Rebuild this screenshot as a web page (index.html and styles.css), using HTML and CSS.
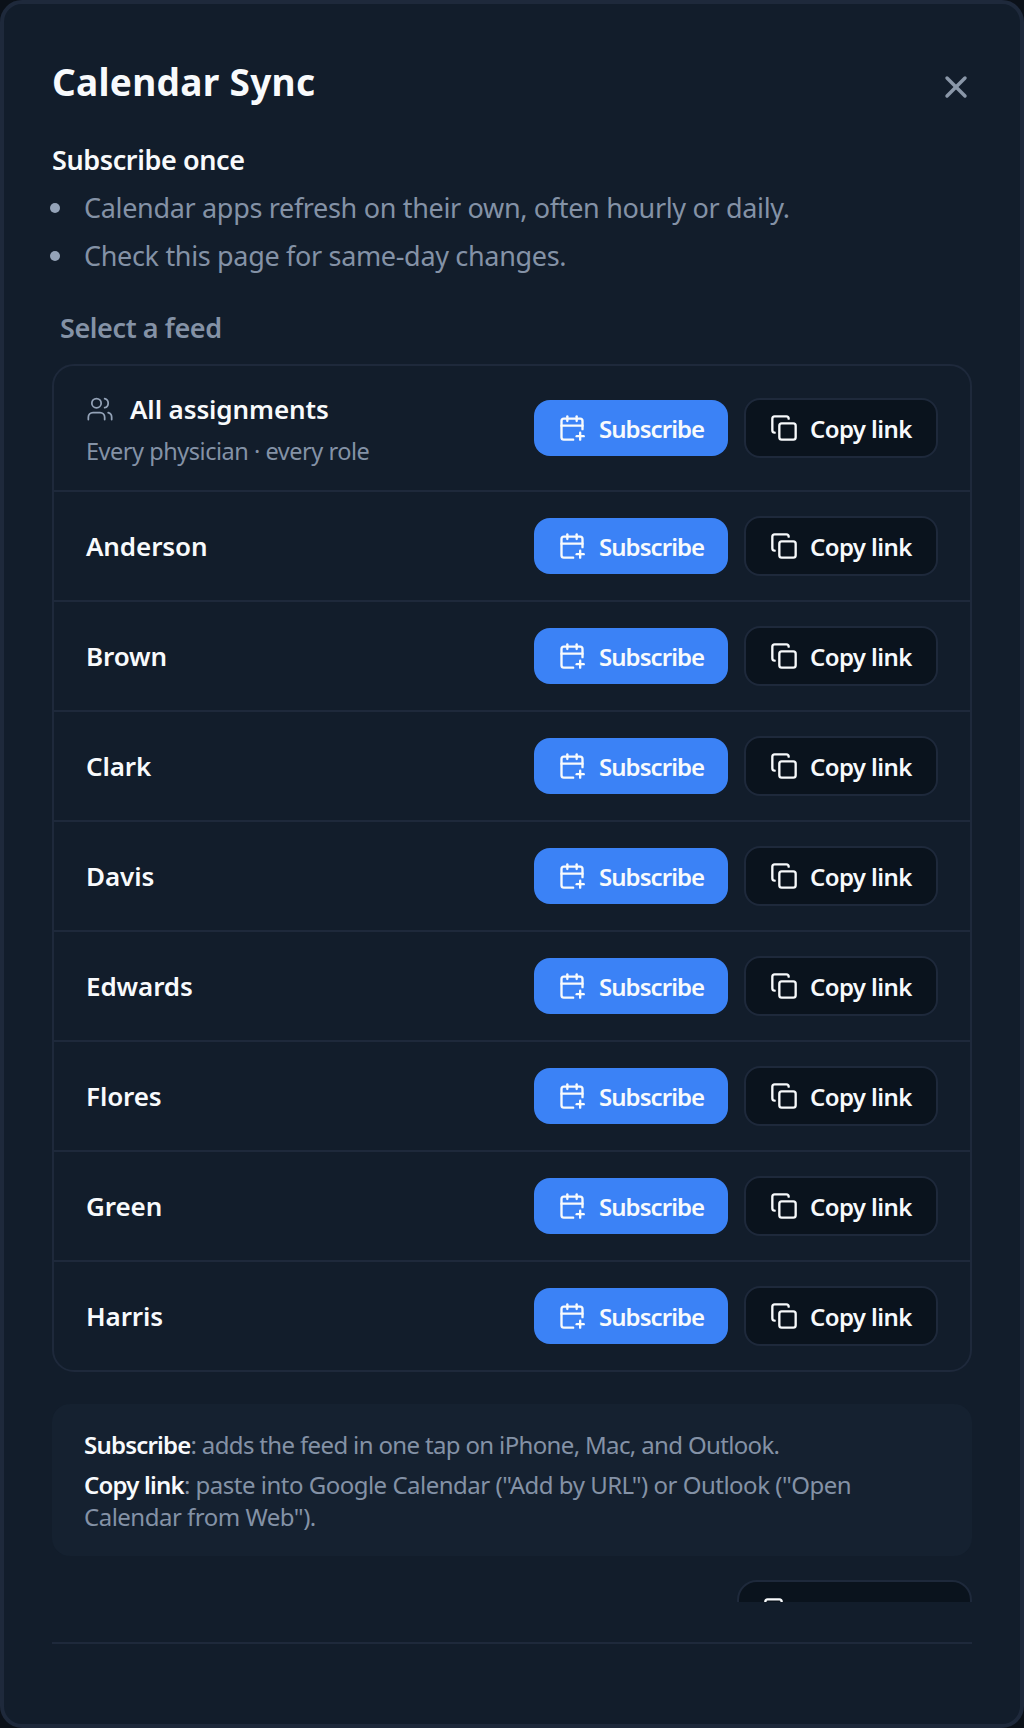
FILE: index.html
```html
<!DOCTYPE html>
<html lang="en">
<head>
<meta charset="utf-8">
<title>Calendar Sync</title>
<link rel="stylesheet" href="styles.css">
</head>
<body>
<svg class="sprite" width="0" height="0" aria-hidden="true">
  <symbol id="i-cal" viewBox="0 0 24 24"><path d="M21 13V6a2 2 0 0 0-2-2H5a2 2 0 0 0-2 2v14c0 1.1.9 2 2 2h8"/><path d="M16 2v4"/><path d="M8 2v4"/><path d="M3 10h18"/><path d="M19 16v6"/><path d="M16 19h6"/></symbol>
  <symbol id="i-copy" viewBox="0 0 24 24"><rect x="8" y="8" width="14" height="14" rx="2"/><path d="M4 16c-1.1 0-2-.9-2-2V4c0-1.1.9-2 2-2h10c1.1 0 2 .9 2 2"/></symbol>
</svg>
<div class="modal">
  <header class="head">
    <h1>Calendar Sync</h1>
    <svg class="close" viewBox="0 0 24 24"><path d="M18 6 6 18"/><path d="m6 6 12 12"/></svg>
  </header>
  <div class="body">
    <h2>Subscribe once</h2>
    <ul class="tips">
      <li>Calendar apps refresh on their own, often hourly or daily.</li>
      <li>Check this page for same-day changes.</li>
    </ul>
    <h3>Select a feed</h3>
    <div class="list">
      <div class="row first">
        <div class="who">
          <div class="all">
            <svg class="users" viewBox="0 0 24 24"><path d="M16 21v-2a4 4 0 0 0-4-4H6a4 4 0 0 0-4 4v2"/><circle cx="9" cy="7" r="4"/><path d="M22 21v-2a4 4 0 0 0-3-3.87"/><path d="M16 3.13a4 4 0 0 1 0 7.75"/></svg>
            <span class="name">All assignments</span>
          </div>
          <div class="sub">Every physician · every role</div>
        </div>
        <a class="btn sub-btn"><svg class="ico"><use href="#i-cal"/></svg>Subscribe</a>
        <a class="btn copy-btn"><svg class="ico"><use href="#i-copy"/></svg>Copy link</a>
      </div>
      <div class="row"><span class="name who">Anderson</span><a class="btn sub-btn"><svg class="ico"><use href="#i-cal"/></svg>Subscribe</a><a class="btn copy-btn"><svg class="ico"><use href="#i-copy"/></svg>Copy link</a></div>
      <div class="row"><span class="name who">Brown</span><a class="btn sub-btn"><svg class="ico"><use href="#i-cal"/></svg>Subscribe</a><a class="btn copy-btn"><svg class="ico"><use href="#i-copy"/></svg>Copy link</a></div>
      <div class="row"><span class="name who">Clark</span><a class="btn sub-btn"><svg class="ico"><use href="#i-cal"/></svg>Subscribe</a><a class="btn copy-btn"><svg class="ico"><use href="#i-copy"/></svg>Copy link</a></div>
      <div class="row"><span class="name who">Davis</span><a class="btn sub-btn"><svg class="ico"><use href="#i-cal"/></svg>Subscribe</a><a class="btn copy-btn"><svg class="ico"><use href="#i-copy"/></svg>Copy link</a></div>
      <div class="row"><span class="name who">Edwards</span><a class="btn sub-btn"><svg class="ico"><use href="#i-cal"/></svg>Subscribe</a><a class="btn copy-btn"><svg class="ico"><use href="#i-copy"/></svg>Copy link</a></div>
      <div class="row"><span class="name who">Flores</span><a class="btn sub-btn"><svg class="ico"><use href="#i-cal"/></svg>Subscribe</a><a class="btn copy-btn"><svg class="ico"><use href="#i-copy"/></svg>Copy link</a></div>
      <div class="row"><span class="name who">Green</span><a class="btn sub-btn"><svg class="ico"><use href="#i-cal"/></svg>Subscribe</a><a class="btn copy-btn"><svg class="ico"><use href="#i-copy"/></svg>Copy link</a></div>
      <div class="row"><span class="name who">Harris</span><a class="btn sub-btn"><svg class="ico"><use href="#i-cal"/></svg>Subscribe</a><a class="btn copy-btn"><svg class="ico"><use href="#i-copy"/></svg>Copy link</a></div>
    </div>
    <div class="notes">
      <p class="tight"><strong>Subscribe</strong>: adds the feed in one tap on iPhone, Mac, and Outlook.</p>
      <p><strong>Copy link</strong>: paste into Google Calendar ("Add by URL") or Outlook ("Open Calendar from Web").</p>
    </div>
    <div class="more"><a class="btn copy-btn wide"><svg class="ico"><use href="#i-copy"/></svg></a></div>
  </div>
  <div class="foot"></div>
</div>
</body>
</html>
```
FILE: styles.css
```css
* { box-sizing: border-box; }
html, body { margin: 0; height: 100%; background: #0b1119; }
body { font-family: "Noto Sans", "Open Sans", sans-serif; color: #f8fafc; overflow: hidden; }
.sprite { position: absolute; }
.modal { height: 1728px; width: 1024px; background: #121d2b; border: 4px solid #1e293b; border-radius: 22px; padding: 0 48px; display: flex; flex-direction: column; }
.head { flex: none; height: 132px; display: flex; align-items: flex-start; justify-content: space-between; }
h1 { margin: 56px 0 0; font-size: 37px; line-height: 44px; font-weight: 700; letter-spacing: 0.3px; }
.close { width: 36px; height: 36px; margin: 65px -2px 0 0; fill: none; stroke: #8a97a8; stroke-width: 2.3; stroke-linecap: round; stroke-linejoin: round; }
.body { height: 1466px; overflow: hidden; flex: none; margin-left: -4px; padding-left: 4px; }
h2 { margin: 6px 0 0; font-size: 27px; line-height: 36px; font-weight: 600; letter-spacing: -0.4px; }
.tips { list-style: none; margin: 6px 0 0; padding: 0; color: #8492a6; font-size: 27px; line-height: 48px; letter-spacing: -0.33px; }
.tips li { display: flex; align-items: center; gap: 24px; margin-left: -2px; }
.tips li::before { content: ""; width: 10px; height: 10px; border-radius: 50%; background: #94a3b8; flex: none; }
h3 { margin: 30px 0 0 8px; font-size: 27px; line-height: 36px; font-weight: 600; color: #8492a6; letter-spacing: -0.4px; }
.list { margin-top: 18px; border: 2px solid #1e293b; border-radius: 22px; }
.row { height: 110px; display: flex; align-items: center; gap: 16px; padding: 0 32px; border-top: 2px solid #1e293b; }
.row.first { height: 124px; border-top: 0; }
.first .who { padding-top: 2px; }
.who { flex: 1; min-width: 0; }
.all { display: flex; align-items: center; gap: 16px; }
.users { width: 28px; height: 28px; fill: none; stroke: #94a3b8; stroke-width: 1.5; stroke-linecap: round; stroke-linejoin: round; }
.name { font-size: 26px; font-weight: 600; line-height: 36px; color: #f8fafc; letter-spacing: -0.1px; }
.sub { margin-top: 8px; font-size: 23.5px; line-height: 32px; color: #8492a6; letter-spacing: -0.47px; }
.btn { display: flex; align-items: center; gap: 12px; border-radius: 16px; font-size: 24px; font-weight: 600; color: #f8fafc; }
.sub-btn { width: 194px; height: 56px; padding-left: 24px; gap: 13px; background: #3b82f6; letter-spacing: -0.95px; }
.copy-btn { width: 194px; height: 60px; padding-left: 24px; background: #0a131d; border: 2px solid #1e293b; letter-spacing: -0.6px; }
.ico { width: 28px; height: 28px; flex: none; fill: none; stroke: #f8fafc; stroke-width: 2; stroke-linecap: round; stroke-linejoin: round; }
.notes { margin-top: 32px; height: 152px; padding: 25px 32px 0; background: #152130; border-radius: 18px; color: #8492a6; font-size: 24px; line-height: 32px; letter-spacing: -0.5px; }
.notes p { margin: 0 0 8px; }
.notes .tight { letter-spacing: -0.65px; }
.notes strong { color: #f8fafc; font-weight: 600; letter-spacing: -0.8px; }
.more { display: flex; justify-content: flex-end; margin-top: 24px; }
.wide { width: 235px; height: 60px; align-items: flex-start; padding-top: 15px; border-radius: 20px; }
.foot { flex: 1; border-top: 2px solid #1e293b; margin-top: 40px; }
```
